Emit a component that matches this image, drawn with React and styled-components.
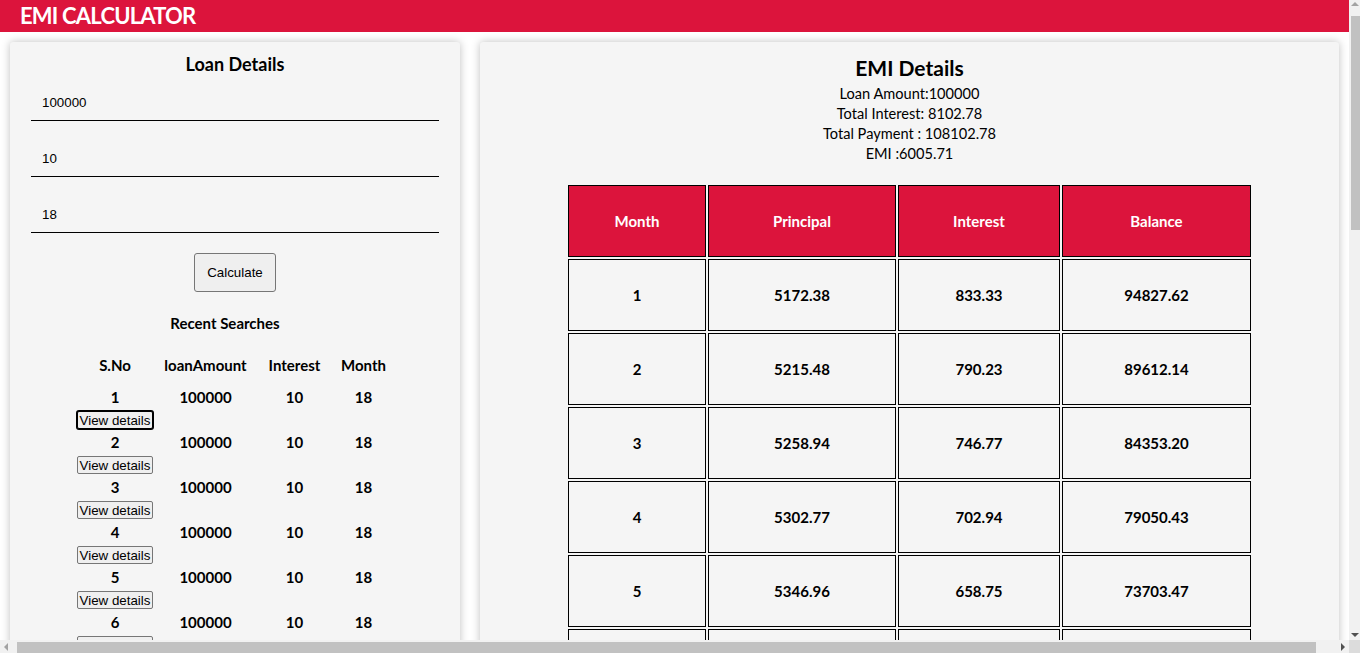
import React from 'react';
import styled, { createGlobalStyle } from 'styled-components';

const GlobalStyle = createGlobalStyle`
  * { box-sizing: border-box; }
  html, body { height: 100%; }
  body {
    margin: 0;
    background: #ffffff;
    font-family: Lato, "Noto Sans", sans-serif;
    color: #000;
    overflow: hidden;
  }
`;

const Viewport = styled.div`
  height: 100vh;
  overflow: hidden;
`;

const Header = styled.header`
  height: 32px;
  background: #dc143c;
  padding: 0 20px;
`;

const Brand = styled.h1`
  margin: 0;
  font-size: 22px;
  line-height: 32px;
  font-weight: 700;
  color: #fff;
  letter-spacing: -0.8px;
`;

const Main = styled.main`
  display: flex;
  align-items: flex-start;
  gap: 20px;
  padding: 10px 21px 10px 10px;
`;

const Card = styled.section`
  background: #f5f5f5;
  box-shadow: 0 0 8px rgba(0, 0, 0, 0.25);
  border-radius: 3px;
  ${({ $wide }) => ($wide ? 'flex: 1;' : 'width: 450px; flex: none;')}
  padding: ${({ $wide }) => ($wide ? '12px 0 30px' : '10px 21px 30px')};
  display: flex;
  flex-direction: column;
  align-items: center;
`;

const CardTitle = styled.h3`
  margin: 0;
  font-size: 18px;
  line-height: 24px;
  font-weight: 700;
`;

const Field = styled.input`
  width: 100%;
  margin-top: ${({ $first }) => ($first ? '9px' : '20px')};
  padding: 10px 11px;
  border: none;
  border-bottom: 1px solid #000;
  background: transparent;
  font-family: "Liberation Sans", Arial, sans-serif;
  font-size: 13.33px;
  line-height: 15px;
  color: #000;
  outline: none;
`;

const CalcButton = styled.button`
  margin-top: 20px;
  padding: 11px 12px;
  font-family: "Liberation Sans", Arial, sans-serif;
  font-size: 13.33px;
  line-height: 15px;
  background: #efefef;
  border: 1px solid #767676;
  border-radius: 3px;
  color: #000;
`;

const SubTitle = styled.h4`
  margin: 21px 20px 0 0;
  font-size: 15px;
  line-height: 20px;
  font-weight: 700;
`;

const RecentTable = styled.table`
  margin-top: 20px;
  border-spacing: 2px;
  font-size: 15px;
  font-weight: 700;

  th, td {
    padding: 0;
    text-align: center;
    vertical-align: top;
    line-height: 20px;
  }

  th {
    padding-bottom: 10px;
  }
`;

const ViewButton = styled.button`
  display: block;
  margin: 4px auto 1px;
  height: 18px;
  padding: 0 2px;
  white-space: nowrap;
  font-family: "Liberation Sans", Arial, sans-serif;
  font-size: 13.33px;
  line-height: 15px;
  font-weight: 400;
  background: #efefef;
  color: #000;
  border: 1px solid ${({ $focused }) => ($focused ? '#000' : '#767676')};
  box-shadow: ${({ $focused }) => ($focused ? '0 0 0 1px #000' : 'none')};
  border-radius: 2px;
`;

const Title = styled.h2`
  margin: 0;
  font-size: 21px;
  line-height: 28px;
  font-weight: 700;
`;

const Summary = styled.div`
  margin-top: 2px;
  font-size: 14.6px;
  line-height: 20px;
  text-align: center;
`;

const EmiTable = styled.table`
  margin-top: 19px;
  width: 687px;
  border-spacing: 2px;
  table-layout: fixed;
  font-size: 15px;
  font-weight: 700;

  th, td {
    border: 1px solid #000;
    height: 72px;
    padding: 0;
    text-align: center;
  }

  th {
    background: #dc143c;
    color: #fff;
  }
`;

/* browser scrollbars, drawn over the page edges */
const VScroll = styled.div`
  position: fixed;
  top: 0;
  right: 0;
  bottom: 12px;
  width: 11px;
  background: #f1f1f1;
  display: flex;
  flex-direction: column;
  align-items: flex-end;
`;

const VThumb = styled.div`
  margin-top: 16px;
  width: 9px;
  height: 214px;
  background: #c1c1c1;
`;

const HScroll = styled.div`
  position: fixed;
  left: 0;
  right: 11px;
  bottom: 0;
  height: 13px;
  background: #f1f1f1;
  display: flex;
  align-items: flex-end;
`;

const HThumb = styled.div`
  margin-left: 17px;
  width: 1299px;
  height: 11px;
  background: #c1c1c1;
`;

const Corner = styled.div`
  position: fixed;
  right: 0;
  bottom: 0;
  width: 11px;
  height: 13px;
  background: #dcdcdc;
`;

const Arrow = styled.span`
  position: absolute;
  width: 0;
  height: 0;
  border: 4px solid transparent;
  ${({ $dir }) =>
    ({
      up: 'top: 2px; right: 1px; border-bottom-color: #a3a3a3; border-top-width: 0;',
      down: 'bottom: 4px; right: 1px; border-top-color: #505050; border-bottom-width: 0;',
      left: 'left: 4px; bottom: 2px; border-right-color: #a3a3a3; border-left-width: 0;',
      right: 'right: 4px; bottom: 2px; border-left-color: #505050; border-right-width: 0;',
    })[$dir]}
`;

const round2 = (v) => Math.round(v * 100) / 100;

const schedule = (() => {
  const P = 100000;
  const r = 10 / 12 / 100;
  const n = 18;
  const emi = round2((P * r * Math.pow(1 + r, n)) / (Math.pow(1 + r, n) - 1));
  let balance = P;
  const rows = [];
  for (let m = 1; m <= n; m++) {
    const interest = round2(balance * r);
    const principal = round2(emi - interest);
    balance = round2(balance - principal);
    rows.push({ m, principal, interest, balance });
  }
  return rows;
})();

const searches = Array.from({ length: 30 }, (_, i) => ({ id: i + 1, amount: 100000, interest: 10, month: 18 }));

export default function App() {
  return (
    <Viewport>
      <GlobalStyle />
      <Header>
        <Brand>EMI CALCULATOR</Brand>
      </Header>
      <Main>
        <Card>
          <CardTitle>Loan Details</CardTitle>
          <Field $first defaultValue="100000" />
          <Field defaultValue="10" />
          <Field defaultValue="18" />
          <CalcButton type="button">Calculate</CalcButton>
          <SubTitle>Recent Searches</SubTitle>
          <RecentTable>
            <colgroup>
              <col style={{ width: 77 }} />
              <col style={{ width: 100 }} />
              <col style={{ width: 74 }} />
              <col style={{ width: 60 }} />
            </colgroup>
            <thead>
              <tr>
                <th>S.No</th>
                <th>loanAmount</th>
                <th>Interest</th>
                <th>Month</th>
              </tr>
            </thead>
            <tbody>
              {searches.map((s) => (
                <tr key={s.id}>
                  <td>
                    {s.id}
                    <ViewButton type="button" $focused={s.id === 1}>View details</ViewButton>
                  </td>
                  <td>{s.amount}</td>
                  <td>{s.interest}</td>
                  <td>{s.month}</td>
                </tr>
              ))}
            </tbody>
          </RecentTable>
        </Card>
        <Card $wide>
          <Title>EMI Details</Title>
          <Summary>
            <div>Loan Amount:100000</div>
            <div>Total Interest: 8102.78</div>
            <div>Total Payment : 108102.78</div>
            <div>EMI :6005.71</div>
          </Summary>
          <EmiTable>
            <colgroup>
              <col style={{ width: 138 }} />
              <col style={{ width: 188 }} />
              <col style={{ width: 162 }} />
              <col style={{ width: 189 }} />
            </colgroup>
            <thead>
              <tr>
                <th>Month</th>
                <th>Principal</th>
                <th>Interest</th>
                <th>Balance</th>
              </tr>
            </thead>
            <tbody>
              {schedule.map((row) => (
                <tr key={row.m}>
                  <td>{row.m}</td>
                  <td>{row.principal.toFixed(2)}</td>
                  <td>{row.interest.toFixed(2)}</td>
                  <td>{row.balance.toFixed(2)}</td>
                </tr>
              ))}
            </tbody>
          </EmiTable>
        </Card>
      </Main>
      <VScroll>
        <Arrow $dir="up" />
        <VThumb />
        <Arrow $dir="down" />
      </VScroll>
      <HScroll>
        <Arrow $dir="left" />
        <HThumb />
        <Arrow $dir="right" />
      </HScroll>
      <Corner />
    </Viewport>
  );
}
